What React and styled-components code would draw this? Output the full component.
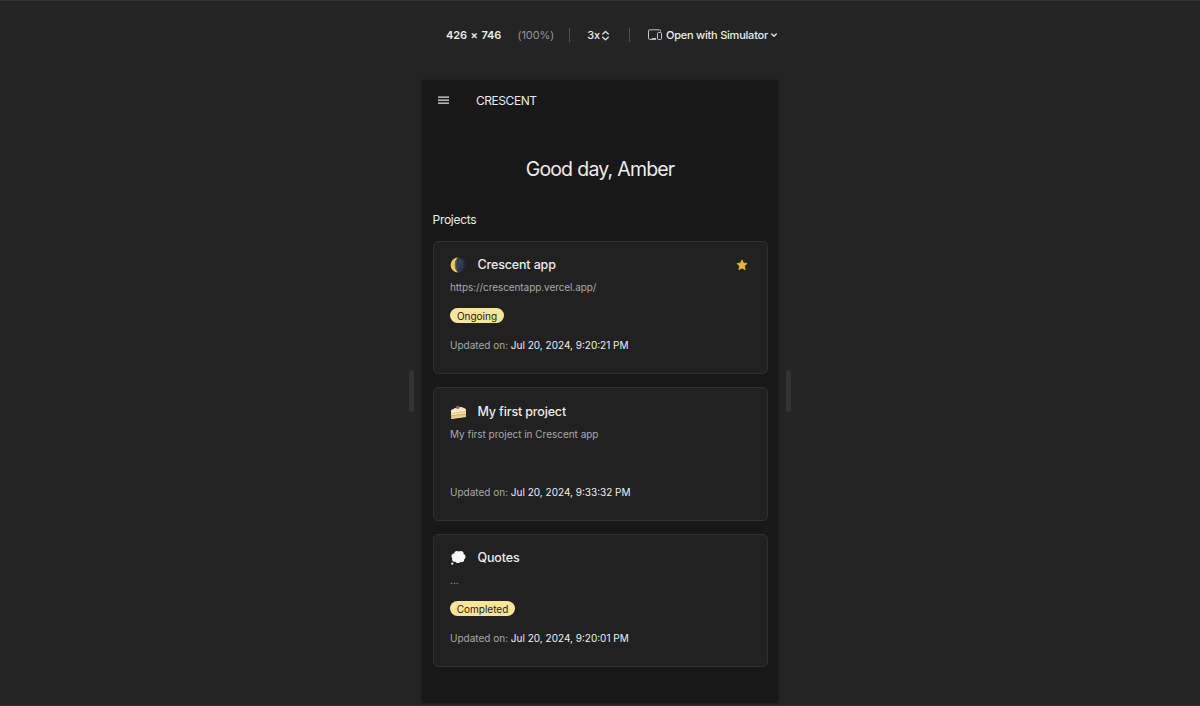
import React from 'react';
import styled, { createGlobalStyle } from 'styled-components';

const GlobalStyle = createGlobalStyle`
  * { box-sizing: border-box; }
  html, body { margin: 0; overflow: hidden; background: #242424; }
  body { font-family: Inter, "Noto Sans", sans-serif; color: #ececec; -webkit-font-smoothing: antialiased; }
`;

const Page = styled.div`
  height: 706px;
  display: flex;
  flex-direction: column;
  align-items: center;
  background: #242424;
  border-top: 1px solid #343434;
  border-bottom: 1px solid #343434;
`;

const Toolbar = styled.div`
  width: 332px;
  height: 69px;
  padding-bottom: 1px;
  margin-left: 24px;
  display: flex;
  align-items: center;
  font-size: 11px;
  line-height: 14px;
  font-weight: 500;
  white-space: nowrap;
`;
const Dimensions = styled.span`
  width: 72px;
  font-weight: 600;
  letter-spacing: -0.12px;
  word-spacing: 1px;
`;
const Zoom = styled.span`
  width: 52px;
  color: #969696;
  font-weight: 400;
  letter-spacing: -0.1px;
`;
const Divider = styled.i`
  width: 1px;
  height: 14px;
  background: #505050;
`;
const Ratio = styled.span`
  display: flex;
  align-items: center;
  gap: 1px;
  width: 42px;
  margin-left: 17px;
`;
const Simulator = styled.span`
  display: flex;
  align-items: center;
  margin-left: 18px;
  letter-spacing: -0.22px;
`;
const SimulatorLabel = styled.span`
  margin: 0 2px 0 4px;
`;

const Stage = styled.main`
  display: flex;
  align-items: flex-start;
  gap: 8px;
  margin-top: 10px;
`;
const Handle = styled.i`
  width: 5px;
  height: 42px;
  margin-top: 290px;
  border-radius: 3px;
  background: #343434;
`;
const Device = styled.section`
  width: 356px;
  height: 623px;
  padding: 0 10.5px;
  border-radius: 2px;
  background: #181818;
  box-shadow: 0 0 5px rgba(0, 0, 0, 0.3);
`;
const AppBar = styled.header`
  display: flex;
  align-items: center;
  height: 40px;
  padding-left: 5.5px;
  gap: 27px;
`;
const Brand = styled.span`
  font-size: 12px;
  letter-spacing: -0.45px;
`;
const Greeting = styled.h1`
  margin: 36px 0 0;
  font-size: 19.5px;
  line-height: 26px;
  font-weight: 400;
  letter-spacing: -0.85px;
  word-spacing: 0.5px;
  text-align: center;
`;
const SectionTitle = styled.h2`
  margin: 29px 0 12.5px;
  font-size: 12px;
  line-height: 17px;
  font-weight: 400;
  letter-spacing: -0.28px;
`;
const List = styled.div`
  display: flex;
  flex-direction: column;
  gap: 13px;
`;
const Card = styled.article`
  height: 133.5px;
  padding: 14.5px 16.5px;
  border: 1px solid #303030;
  border-radius: 5px;
  background: #212121;
`;
const CardHead = styled.div`
  display: flex;
  align-items: center;
  height: 18px;
  padding-right: 2.5px;
`;
const Title = styled.h3`
  flex: 1;
  margin: 0 0 0 10.5px;
  font-size: 12.5px;
  line-height: 18px;
  font-weight: 500;
  letter-spacing: ${(p) => p.$tracking}px;
`;
const Description = styled.p`
  margin: 6px 0 0;
  height: 14px;
  font-size: 10px;
  line-height: 14px;
  color: #a9a9a9;
  letter-spacing: ${(p) => p.$tracking}px;
`;
const BadgeRow = styled.div`
  display: flex;
  height: 15px;
  margin-top: 14px;
`;
const Badge = styled.span`
  display: flex;
  align-items: center;
  justify-content: center;
  width: ${(p) => p.$width}px;
  height: 15px;
  border-radius: 8px;
  background: #fbe59b;
  color: #202020;
  font-size: 10px;
`;
const Updated = styled.p`
  margin: 15px 0 0;
  font-size: 10px;
  line-height: 14px;
  color: #a9a9a9;
  white-space: nowrap;
`;
const Time = styled.span`
  color: #f0f0f0;
  letter-spacing: 0;
`;

const Chevrons = () => (
  <svg width="9" height="13" viewBox="0 0 9 13" fill="none" stroke="#ddd" strokeWidth="1.3" strokeLinecap="round" strokeLinejoin="round">
    <path d="M1.7 5 4.5 2.4 7.3 5M1.7 8.2 4.5 10.8l2.8-2.6" />
  </svg>
);
const Chevron = () => (
  <svg width="8" height="8" viewBox="0 0 8 8" fill="none" stroke="#ddd" strokeWidth="1.4" strokeLinecap="round" strokeLinejoin="round">
    <path d="m1.7 3 2.3 2.3L6.3 3" />
  </svg>
);
const Devices = () => (
  <svg width="14" height="12" viewBox="0 0 14 12" fill="none" stroke="#c4c4c4" strokeWidth="1">
    <path d="M12.5 2.5V2A1.2 1.2 0 0 0 11.3.8H1.7A1.2 1.2 0 0 0 .5 2v7.2c0 .7.5 1.2 1.2 1.2h6.5" />
    <rect x="9.5" y="3.5" width="4" height="7" rx="1" />
    <path d="M4 9.5h4" />
  </svg>
);
const Menu = () => (
  <svg width="11" height="8" viewBox="0 0 11 8" fill="none" stroke="#e4e4e4" strokeWidth="1.25">
    <path d="M0 1h11M0 4h11M0 7h11" />
  </svg>
);
const Star = () => (
  <svg width="12" height="12" viewBox="0 0 12 12" fill="#eab43b" stroke="#eab43b" strokeWidth=".8" strokeLinejoin="round">
    <path d="m6 .9 1.5 3.2 3.6.4-2.7 2.4.8 3.8L6 8.9l-3.2 1.8.8-3.8L.9 4.5l3.6-.4Z" />
  </svg>
);
const Moon = () => (
  <svg width="17" height="16" viewBox="0 0 17 16">
    <circle cx="8" cy="8" r="7.4" fill="#2b3950" />
    <path d="M8 .6a7.4 7.4 0 0 0 0 14.8C3.8 11.8 3.8 4.2 8 .6Z" fill="#f0c95c" />
    <path d="M8 .6C3.8 4 3.8 12 8 15.4 5.8 11 5.8 5 8 .6Z" fill="#6b6550" />
    <circle cx="10" cy="5" r="1.7" fill="#3a4962" />
    <circle cx="8.4" cy="9" r="1.7" fill="#34445d" />
    <path d="M12.8 2.4a7.4 7.4 0 0 1-2 12.4c3-3.2 3.6-8.3 2-12.4Z" fill="#202b3c" />
  </svg>
);
const Cake = () => (
  <svg width="17" height="16" viewBox="0 0 17 16">
    <path d="M1 6.2 8 2.8c3 .1 6 1.1 8 2.5v7.2L1.2 14.7Z" fill="#eac77d" />
    <path d="M1 6.2 8 2.8c3 .1 6 1.1 8 2.5L1.1 7.9Z" fill="#ece3d6" />
    <path d="m1.1 7.2 14.9-2v1.6L1.1 8.7Z" fill="#f8efe0" />
    <path d="m1.1 9.7 14.9-1.8v1.7L1.1 11.4Z" fill="#f7e3bd" />
    <path d="m1.1 11.2 14.9-1.8v.8L1.1 12Z" fill="#dfa746" />
    <path d="m1.2 14 14.8-2.1v1L1.2 15Z" fill="#f3dfb7" />
    <circle cx="7.7" cy="3.3" r="1.7" fill="#b54a3c" />
  </svg>
);
const Thought = () => (
  <svg width="17" height="16" viewBox="0 0 17 16" fill="#f7f7f7">
    <circle cx="4.3" cy="6.2" r="2.8" />
    <circle cx="7" cy="3.7" r="2.8" />
    <circle cx="10.8" cy="3.8" r="2.8" />
    <circle cx="12.8" cy="6.8" r="2.7" />
    <circle cx="11.5" cy="9.6" r="2.7" />
    <circle cx="8" cy="10.5" r="2.6" />
    <circle cx="4.8" cy="9.2" r="2.6" />
    <circle cx="8.5" cy="7" r="4" />
    <circle cx="2.3" cy="13.7" r="1.1" />
  </svg>
);

const projects = [
  { icon: <Moon />, title: 'Crescent app', text: 'https://crescentapp.vercel.app/', badge: 'Ongoing', badgeWidth: 54, time: 'Jul 20, 2024, 9:20:21 PM', starred: true, tracking: -0.15, textTracking: -0.08 },
  { icon: <Cake />, title: 'My first project', text: 'My first project in Crescent app', time: 'Jul 20, 2024, 9:33:32 PM', tracking: -0.15, textTracking: -0.02 },
  { icon: <Thought />, title: 'Quotes', text: '...', badge: 'Completed', badgeWidth: 65, time: 'Jul 20, 2024, 9:20:01 PM', tracking: -0.15, textTracking: 0 },
];

export default function App() {
  return (
    <>
      <GlobalStyle />
      <Page>
        <Toolbar>
          <Dimensions>426 × 746</Dimensions>
          <Zoom>(100%)</Zoom>
          <Divider />
          <Ratio>3x<Chevrons /></Ratio>
          <Divider />
          <Simulator><Devices /><SimulatorLabel>Open with Simulator</SimulatorLabel><Chevron /></Simulator>
        </Toolbar>
        <Stage>
          <Handle />
          <Device>
            <AppBar><Menu /><Brand>CRESCENT</Brand></AppBar>
            <Greeting>Good day, Amber</Greeting>
            <SectionTitle>Projects</SectionTitle>
            <List>
              {projects.map((p) => (
                <Card key={p.title}>
                  <CardHead>{p.icon}<Title $tracking={p.tracking}>{p.title}</Title>{p.starred && <Star />}</CardHead>
                  <Description $tracking={p.textTracking}>{p.text}</Description>
                  <BadgeRow>{p.badge && <Badge $width={p.badgeWidth}>{p.badge}</Badge>}</BadgeRow>
                  <Updated>Updated on: <Time>{p.time}</Time></Updated>
                </Card>
              ))}
            </List>
          </Device>
          <Handle />
        </Stage>
      </Page>
    </>
  );
}
